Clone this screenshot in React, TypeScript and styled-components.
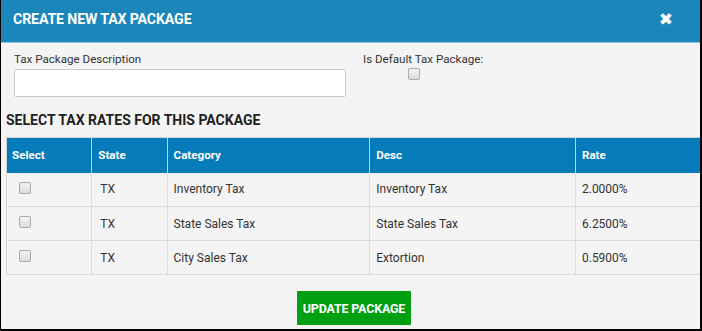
import React from "react";
import styled, { createGlobalStyle } from "styled-components";

const Global = createGlobalStyle`
  html, body { margin: 0; padding: 0; background: #000; }
  body { font-family: Roboto, "Liberation Sans", Arial, sans-serif; }
  * { box-sizing: border-box; }
`;

const Frame = styled.div`
  width: 702px;
  height: 331px;
  background: #000;
  padding: 0 2px 2px 1px;
  overflow: hidden;
`;

const Modal = styled.div`
  height: 100%;
  background: #f4f4f4;
  display: flex;
  flex-direction: column;
  overflow: hidden;
`;

const Header = styled.div`
  height: 43px;
  background: #1a86b9;
  border-bottom: 1px solid #8cc3de;
  display: flex;
  align-items: center;
  justify-content: space-between;
  padding: 0 27px 4px 12px;
  flex-shrink: 0;
`;

const Title = styled.h1`
  margin: 0;
  color: #fff;
  font-size: 14.2px;
  font-weight: 700;
  letter-spacing: -0.15px;
`;

const Close = styled.span`
  color: #fff;
  font-size: 17px;
  font-weight: 700;
  line-height: 1;
  font-family: "DejaVu Sans", sans-serif;
`;

const FormRow = styled.div`
  display: flex;
  padding: 8px 0 0 13px;
`;

const Field = styled.div<{ $w: number }>`
  width: ${(p) => p.$w}px;
  display: flex;
  flex-direction: column;
`;

const Label = styled.label`
  font-size: 11.6px;
  color: #333;
  line-height: 16px;
  height: 17px;
`;

const TextInput = styled.input`
  width: 332px;
  height: 28px;
  border: 1px solid #ccc;
  border-radius: 2px;
  background: #fff;
  margin-top: 1px;
`;

const Box = styled.span<{ $ml?: number }>`
  display: inline-block;
  width: 12px;
  height: 12px;
  border: 1px solid #a9a9a9;
  border-radius: 2px;
  background: linear-gradient(#f4f4f4, #dcdcdc);
  margin-left: ${(p) => p.$ml ?? 0}px;
`;

const Section = styled.h2`
  margin: 15px 0 0 5px;
  font-size: 14px;
  font-weight: 700;
  color: #222;
  line-height: 17px;
`;

const Table = styled.table`
  margin: 8px 0 0 5px;
  border-collapse: collapse;
  width: 710px;
  font-size: 12px;
  color: #333;
  border-top: 1px solid #d4d4d4;
  border-left: 1px solid #d4d4d4;
`;

const Th = styled.th<{ $w: number }>`
  width: ${(p) => p.$w}px;
  height: 35px;
  background: #067bb9;
  color: #fff;
  font-size: 11.6px;
  font-weight: 700;
  text-align: left;
  padding: 0 6px;
  border-left: 1px solid #b9d5e6;
  &:first-child { border-left: none; padding-left: 5px; }
`;

const Td = styled.td<{ $pl?: number }>`
  height: 34px;
  padding: 0 6px 0 ${(p) => p.$pl ?? 6}px;
  border-left: 1px solid #dcdcdc;
  border-bottom: 1px solid #dcdcdc;
  &:first-child { border-left: none; }
`;

const Footer = styled.div`
  display: flex;
  justify-content: center;
  padding-top: 16px;
`;

const Button = styled.button`
  width: 114px;
  height: 34px;
  margin-left: 7px;
  background: #00a012;
  border: none;
  color: #fff;
  font-family: Roboto, "Liberation Sans", Arial, sans-serif;
  font-size: 12.5px;
  font-weight: 700;
  letter-spacing: -0.2px;
  padding: 0;
`;

const rows = [
  { cat: "Inventory Tax", desc: "Inventory Tax", rate: "2.0000%" },
  { cat: "State Sales Tax", desc: "State Sales Tax", rate: "6.2500%" },
  { cat: "City Sales Tax", desc: "Extortion", rate: "0.5900%" },
];

export default function App() {
  return (
    <Frame>
      <Global />
      <Modal>
        <Header>
          <Title>CREATE NEW TAX PACKAGE</Title>
          <Close>✖</Close>
        </Header>
        <FormRow>
          <Field $w={349}>
            <Label>Tax Package Description</Label>
            <TextInput />
          </Field>
          <Field $w={200}>
            <Label>Is Default Tax Package:</Label>
            <Box $ml={45} />
          </Field>
        </FormRow>
        <Section>SELECT TAX RATES FOR THIS PACKAGE</Section>
        <Table>
          <thead>
            <tr>
              <Th $w={85}>Select</Th>
              <Th $w={75}>State</Th>
              <Th $w={202}>Category</Th>
              <Th $w={205}>Desc</Th>
              <Th $w={140}>Rate</Th>
            </tr>
          </thead>
          <tbody>
            {rows.map((r) => (
              <tr key={r.cat}>
                <Td $pl={12}>
                  <Box />
                </Td>
                <Td $pl={8}>TX</Td>
                <Td>{r.cat}</Td>
                <Td>{r.desc}</Td>
                <Td>{r.rate}</Td>
              </tr>
            ))}
          </tbody>
        </Table>
        <Footer>
          <Button>UPDATE PACKAGE</Button>
        </Footer>
      </Modal>
    </Frame>
  );
}
